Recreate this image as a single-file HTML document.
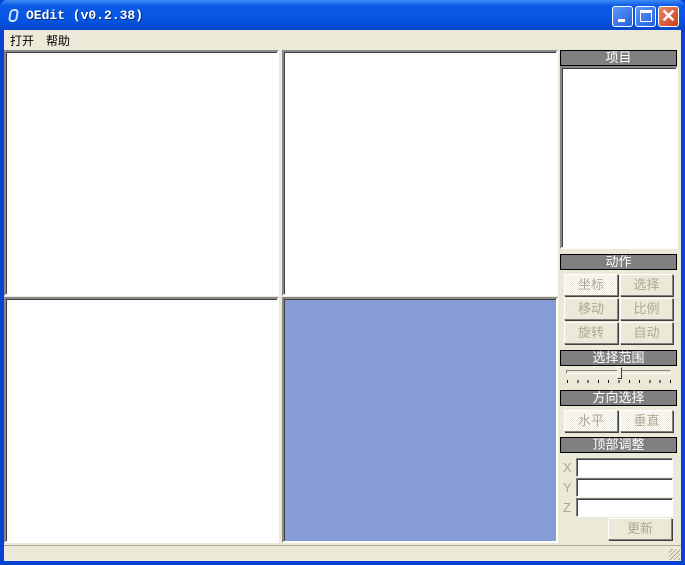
<!DOCTYPE html>
<html><head><meta charset="utf-8"><style>
*{box-sizing:border-box;margin:0;padding:0}
body{width:685px;height:565px;background:#0842d4;font-family:"Liberation Sans","Noto Sans CJK SC",sans-serif;font-size:12px;position:relative;overflow:hidden}
.a{position:absolute}
#tb{left:0;top:0;width:685px;height:30px;background:linear-gradient(#3d8cf7,#0a5ae6 20%,#0654e0 70%,#0746c8);border-radius:7px 7px 0 0}
#title{left:26px;top:8px;color:#fff;font-family:"Liberation Mono",monospace;font-weight:bold;font-size:13px;text-shadow:1px 1px #0a2a80}
#client{left:4px;top:30px;width:677px;height:531px;background:#ece9d8}
.tbtn{top:6px;width:21px;height:21px;border:1px solid #fff;border-radius:3px;background:linear-gradient(135deg,#5e97f8,#2461e0)}
.pn{background:#fff;border:2px solid;border-color:#888 #fff #fff #888;box-shadow:inset 1px 1px #404040}
.lab{left:560px;width:117px;height:16px;background:#808080;border:1px solid #000;color:#fff;text-align:center;line-height:14px;font-size:13px}
.btn{height:22px;border:1px solid;border-color:#fff #808080 #808080 #fff;box-shadow:1px 1px #404040;color:#aca899;text-align:center;line-height:20px;font-size:13px}
.in{left:576px;width:97px;height:19px;background:#fff;border:1px solid;border-color:#808080 #fff #fff #808080;box-shadow:inset 1px 1px #404040}
.xl{left:563px;color:#aca899;font-size:13px}
</style></head><body>
<div class="a" id="tb"></div>
<div class="a" style="left:9px;top:9px;width:9px;height:13px;border:2px solid #cfe0ff;border-radius:4px;transform:skewX(-10deg)"></div>
<div class="a" id="title">OEdit (v0.2.38)</div>
<div class="a tbtn" style="left:612px"><div class="a" style="left:5px;top:12px;width:7px;height:3px;background:#fff"></div></div>
<div class="a tbtn" style="left:635px"><div class="a" style="left:4px;top:3px;width:12px;height:12px;border:1px solid #fff;border-top-width:3px"></div></div>
<div class="a tbtn" style="left:658px;background:linear-gradient(135deg,#e88a6a,#c8401a);color:#fff;font-size:18px;font-weight:bold;text-align:center;line-height:19px">✕</div>
<div class="a" id="client"></div>
<div class="a" style="left:10px;top:32px;font-size:12px">打开</div>
<div class="a" style="left:46px;top:32px;font-size:12px">帮助</div>
<div class="a pn" style="left:4px;top:50px;width:275px;height:246px"></div>
<div class="a pn" style="left:282px;top:50px;width:276px;height:246px"></div>
<div class="a pn" style="left:4px;top:297px;width:275px;height:246px"></div>
<div class="a pn" style="left:282px;top:297px;width:276px;height:246px;background:#869cd6"></div>
<div class="a lab" style="top:50px">项目</div>
<div class="a pn" style="left:560px;top:66px;width:118px;height:183px"></div>
<div class="a lab" style="top:254px">动作</div>
<div class="a btn" style="left:564px;top:274px;width:54px;background:repeating-conic-gradient(#fff 0 25%,#ece9d8 0 50%) 0 0/2px 2px">坐标</div>
<div class="a btn" style="left:620px;top:274px;width:53px">选择</div>
<div class="a btn" style="left:564px;top:298px;width:54px">移动</div>
<div class="a btn" style="left:620px;top:298px;width:53px">比例</div>
<div class="a btn" style="left:564px;top:322px;width:54px">旋转</div>
<div class="a btn" style="left:620px;top:322px;width:53px">自动</div>
<div class="a lab" style="top:350px">选择范围</div>
<div class="a" style="left:566px;top:370px;width:105px;height:4px;border:1px solid;border-color:#808080 #fff #fff #808080"></div>
<div class="a" style="left:617px;top:367px;width:5px;height:12px;background:#ece9d8;border:1px solid;border-color:#fff #404040 #404040 #fff"></div>
<div class="a" style="left:567px;top:380px;width:104px;height:3px;background:repeating-linear-gradient(90deg,#000 0 1px,transparent 1px 10.3px)"></div>
<div class="a lab" style="top:390px">方向选择</div>
<div class="a btn" style="left:564px;top:410px;width:54px;background:repeating-conic-gradient(#fff 0 25%,#ece9d8 0 50%) 0 0/2px 2px">水平</div>
<div class="a btn" style="left:620px;top:410px;width:53px;background:repeating-conic-gradient(#fff 0 25%,#ece9d8 0 50%) 0 0/2px 2px">垂直</div>
<div class="a lab" style="top:437px">顶部调整</div>
<div class="a xl" style="top:460px">X</div><div class="a in" style="top:458px"></div>
<div class="a xl" style="top:480px">Y</div><div class="a in" style="top:478px"></div>
<div class="a xl" style="top:500px">Z</div><div class="a in" style="top:498px"></div>
<div class="a btn" style="left:608px;top:518px;width:64px">更新</div>
<div class="a" style="left:4px;top:545px;width:677px;height:16px;border-top:1px solid #aca899"></div>
<div class="a" style="left:669px;top:549px;width:11px;height:11px;background:repeating-linear-gradient(135deg,transparent 0 2px,#aca899 2px 3px)"></div>
</body></html>
